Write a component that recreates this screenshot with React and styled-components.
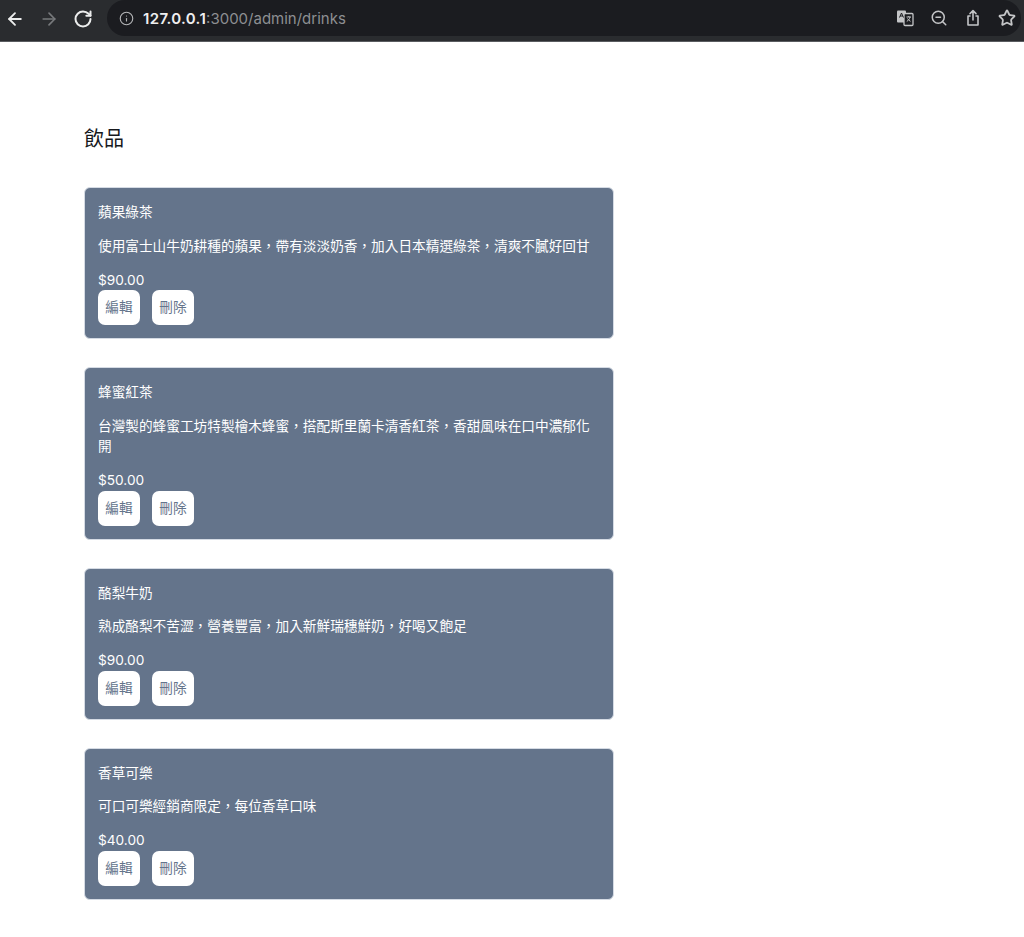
import React from 'react';
import styled, { createGlobalStyle } from 'styled-components';
import { ArrowLeft, ArrowRight, RotateCw, Info, ZoomOut, Star } from 'lucide-react';

const Global = createGlobalStyle`
  html, body { margin: 0; padding: 0; background: #fff; }
  body { font-family: Inter, "Noto Sans CJK TC", "Noto Sans", sans-serif; }
`;

const Toolbar = styled.header`
  height: 41px;
  background: #2a2c2f;
  border-bottom: 1px solid #5a5c60;
  display: flex;
  align-items: flex-start;
  box-sizing: content-box;
  overflow: hidden;
`;

const NavGroup = styled.nav`
  display: flex;
  align-items: center;
  gap: 14px;
  width: 107px;
  height: 37px;
  padding-left: 5px;
  box-sizing: border-box;
`;

const NavButton = styled.span`
  display: flex;
  color: ${(p) => (p.$dim ? '#77797c' : '#eceded')};
`;

const Omnibox = styled.div`
  flex: 1;
  height: 36px;
  margin: 0 3px 0 0;
  background: #1b1c20;
  border-radius: 18px;
  display: flex;
  align-items: center;
  padding: 0 5px 0 12px;
`;

const Url = styled.div`
  margin-left: 9px;
  font-size: 15px;
  color: #8d8f92;
  flex: 1;
`;

const Host = styled.span`
  color: #eeeeef;
  font-weight: 600;
  letter-spacing: 0.35px;
`;

const Actions = styled.div`
  display: flex;
  align-items: center;
  gap: 16px;
  color: #c4c5c7;
`;

const ActionSlot = styled.span`
  display: flex;
  justify-content: center;
  width: 18px;
`;

const Main = styled.main`
  padding: 85px 0 37px 84px;
  width: 530px;
`;

const Title = styled.h1`
  margin: 0 0 36px;
  font-size: 20px;
  line-height: 24px;
  font-weight: 400;
  color: #16181c;
`;

const List = styled.div`
  display: flex;
  flex-direction: column;
  gap: 28px;
`;

const Card = styled.article`
  background: #64748b;
  border: 1px solid #d5dbe4;
  border-radius: 6px;
  padding: 14px 13px 13px;
  color: #fff;
  font-size: 13.67px;
  line-height: 20.5px;
`;

const Name = styled.div`
  margin-bottom: 13px;
`;

const Desc = styled.p`
  margin: 0 0 13.5px;
  max-width: 502px;
`;

const Price = styled.div`
  font-size: 13.67px;
`;

const Buttons = styled.div`
  display: flex;
  gap: 12px;
`;

const Button = styled.button`
  width: 42px;
  height: 35px;
  padding: 0;
  border: 0;
  border-radius: 7px;
  background: #fff;
  color: #64748b;
  font: inherit;
`;

const drinks = [
  { name: '蘋果綠茶', desc: '使用富士山牛奶耕種的蘋果，帶有淡淡奶香，加入日本精選綠茶，清爽不膩好回甘', price: '$90.00' },
  { name: '蜂蜜紅茶', desc: '台灣製的蜂蜜工坊特製檜木蜂蜜，搭配斯里蘭卡清香紅茶，香甜風味在口中濃郁化開', price: '$50.00' },
  { name: '酪梨牛奶', desc: '熟成酪梨不苦澀，營養豐富，加入新鮮瑞穗鮮奶，好喝又飽足', price: '$90.00' },
  { name: '香草可樂', desc: '可口可樂經銷商限定，每位香草口味', price: '$40.00' },
];

const TranslateIcon = () => (
  <svg width="18" height="18" viewBox="0 0 18 18">
    <rect x="1" y="1.5" width="9" height="12" rx="1" fill="#c4c5c7" />
    <rect x="8" y="4.5" width="9" height="12" rx="1" fill="#1b1c20" stroke="#c4c5c7" strokeWidth="1.3" />
    <path d="M3.5 8.5 5.5 4l2 4.5M4.2 7h2.6" fill="none" stroke="#1b1c20" strokeWidth="1" />
    <path d="M10.5 8h4.5M12.8 7v1M14 8c-.4 2-1.6 3.5-3.2 4.4M11.5 9.5c.6 1.2 1.7 2.2 3 2.8" fill="none" stroke="#c4c5c7" strokeWidth="1" />
  </svg>
);

const ShareIcon = () => (
  <svg width="16" height="18" viewBox="0 0 16 18" fill="none" stroke="#c4c5c7" strokeWidth="1.6" strokeLinecap="round" strokeLinejoin="round">
    <path d="M5 7H3v9h10V7h-2" />
    <path d="M8 11V2M5 4.6 8 1.7l3 2.9" />
  </svg>
);

export default function App() {
  return (
    <div lang="zh-TW">
      <Global />
      <Toolbar>
        <NavGroup>
          <NavButton><ArrowLeft size={20} strokeWidth={2.2} /></NavButton>
          <NavButton $dim><ArrowRight size={20} strokeWidth={2} /></NavButton>
          <NavButton><RotateCw size={20} strokeWidth={2.4} /></NavButton>
        </NavGroup>
        <Omnibox>
          <NavButton $dim><Info size={15} strokeWidth={1.8} color="#b5b6b8" /></NavButton>
          <Url><Host>127.0.0.1</Host>:3000/admin/drinks</Url>
          <Actions>
            <ActionSlot><TranslateIcon /></ActionSlot>
            <ActionSlot><ZoomOut size={18} strokeWidth={2} /></ActionSlot>
            <ActionSlot><ShareIcon /></ActionSlot>
            <ActionSlot><Star size={18} strokeWidth={2.4} /></ActionSlot>
          </Actions>
        </Omnibox>
      </Toolbar>
      <Main>
        <Title>飲品</Title>
        <List>
          {drinks.map((d) => (
            <Card key={d.name}>
              <Name>{d.name}</Name>
              <Desc>{d.desc}</Desc>
              <Price>{d.price}</Price>
              <Buttons>
                <Button>編輯</Button>
                <Button>刪除</Button>
              </Buttons>
            </Card>
          ))}
        </List>
      </Main>
    </div>
  );
}
